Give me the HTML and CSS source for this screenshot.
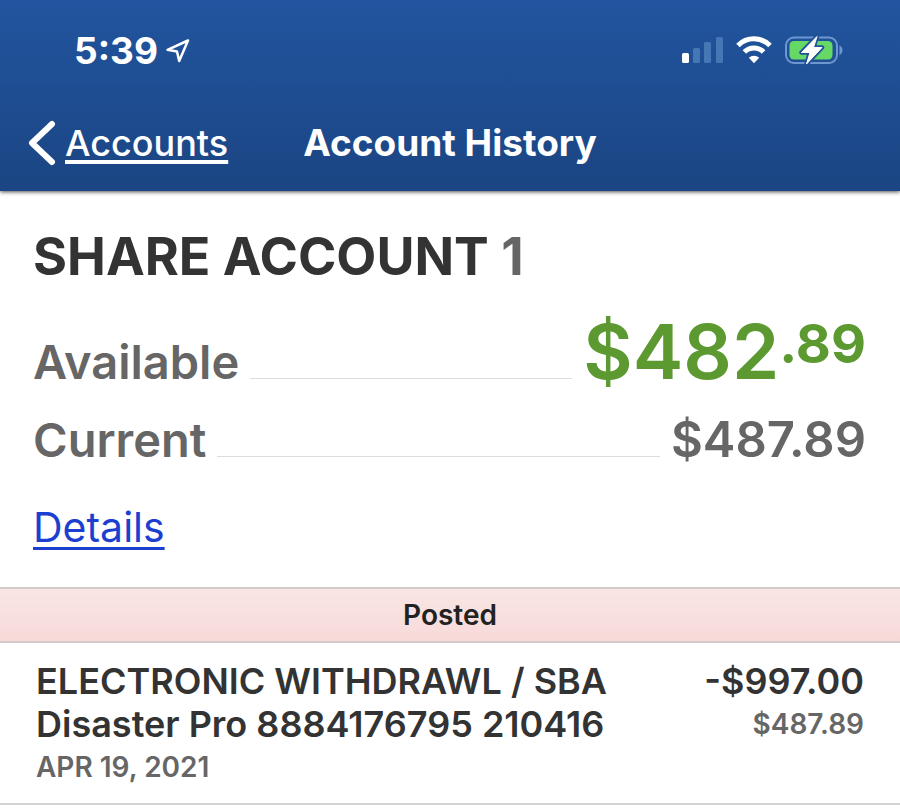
FILE: index.html
```html
<!DOCTYPE html>
<html lang="en">
<head>
<meta charset="utf-8">
<meta name="viewport" content="width=device-width, initial-scale=1">
<title>Account History</title>
<link rel="stylesheet" href="styles.css">
</head>
<body>
<header class="top">
  <div class="status">
    <span class="clock">5:39</span>
    <svg class="locate" width="26" height="26" viewBox="0 0 26 26" aria-hidden="true"><path d="M23 2.500L2.500 11.800l9.500 1.700 2.200 9.500z" fill="none" stroke="#fff" stroke-width="2.500" stroke-linejoin="round"/></svg>
    <svg class="system" width="164" height="32" viewBox="0 0 164 32" aria-hidden="true">
      <rect x="2" y="18" width="7" height="10" rx="1.600" fill="#fff"/>
      <g fill="#4677b5"><rect x="13" y="13" width="7" height="15" rx="1.600"/><rect x="24" y="7" width="7" height="21" rx="1.600"/><rect x="36" y="2" width="7" height="26" rx="1.600"/></g>
      <g fill="none" stroke="#fff" stroke-width="5">
        <path d="M58 10.500a22.500 22.500 0 0 1 32 0"/>
        <path d="M64.400 17a13.400 13.400 0 0 1 19.200 0"/>
      </g>
      <path d="M68.800 22.700a7.600 7.600 0 0 1 10.400 0L74 28.200z" fill="#fff"/>
      <rect x="106" y="2.500" width="51" height="25.500" rx="8" fill="none" stroke="#6f97cf" stroke-width="2"/>
      <rect x="109.500" y="6" width="43" height="18.500" rx="4.500" fill="#65d866"/>
      <path d="M159.500 10.500c4 1.500 4 8 0 9.500z" fill="#6f97cf"/>
      <path d="M137 1.500L121.500 17.500h8.500L126.500 29l15.500-16.500h-8.500z" fill="#fff" stroke="#21539b" stroke-width="4.500" stroke-linejoin="round"/>
      <path d="M137 1.500L121.500 17.500h8.500L126.500 29l15.500-16.500h-8.500z" fill="#fff" stroke="#fff" stroke-width="1" stroke-linejoin="round"/>
    </svg>
  </div>
  <nav class="bar">
    <a class="back" href="#accounts">
      <svg width="28" height="46" viewBox="0 0 28 46" aria-hidden="true"><path d="M24 4L4 23l20 19" fill="none" stroke="#fff" stroke-width="6" stroke-linecap="round" stroke-linejoin="round"/></svg>
      <span class="back-text">Accounts</span>
    </a>
    <h1 class="title">Account History</h1>
  </nav>
</header>
<main>
  <section class="summary">
    <h2 class="account">SHARE ACCOUNT <span class="suffix">1</span></h2>
    <dl class="balances">
      <div class="balance">
        <dt>Available</dt>
        <dd class="available">$482<span class="cents">.89</span></dd>
      </div>
      <div class="balance">
        <dt>Current</dt>
        <dd>$487.89</dd>
      </div>
    </dl>
    <a class="details" href="#details">Details</a>
  </section>
  <section>
    <h3 class="band">Posted</h3>
    <ul class="history">
      <li class="entry">
        <div class="what">
          <p class="name">ELECTRONIC WITHDRAWL / SBA Disaster Pro 8884176795 210416</p>
          <p class="minor">APR 19, 2021</p>
        </div>
        <div class="sums">
          <p class="amount">-$997.00</p>
          <p class="minor">$487.89</p>
        </div>
      </li>
    </ul>
  </section>
</main>
</body>
</html>
```
FILE: styles.css
```css
* { box-sizing: border-box; }

body, h1, h2, h3, p, ul, dl, dt, dd { margin: 0; padding: 0; }

body {
  background: #fff;
  color: #333;
  font-family: Inter, "Liberation Sans", sans-serif;
}

.top {
  position: relative;
  padding-bottom: 7px;
  color: #fff;
  background: linear-gradient(#21559f, #1b4583);
  box-shadow: 0 1px 4px rgba(0, 0, 0, 0.7);
}

.status {
  display: flex;
  align-items: center;
  height: 102px;
  padding: 0 56px 0 74px;
}

.clock {
  font-size: 37px;
  font-weight: 700;
  line-height: 44px;
}

.locate { margin-left: 7px; }

.system { margin-left: auto; }

.bar {
  display: grid;
  grid-template-columns: 1fr auto 1fr;
  align-items: center;
  height: 82px;
  padding: 0 28px;
}

.back {
  display: flex;
  align-items: center;
  gap: 9px;
  color: #fff;
  text-decoration: none;
}

.back-text {
  font-size: 36px;
  font-weight: 500;
  line-height: 44px;
  text-decoration: underline;
  text-decoration-thickness: 4px;
  text-underline-offset: 4px;
}

.title {
  font-size: 37px;
  font-weight: 700;
  line-height: 44px;
}

.summary { padding: 34px 34px 32px 33px; }

.account {
  font-size: 52px;
  font-weight: 700;
  line-height: 64px;
}

.suffix { color: #666; }

.balances {
  display: grid;
  gap: 21px;
  margin: 22px 0 31px;
}

.balance {
  display: flex;
  align-items: baseline;
  color: #666;
  font-size: 49px;
  font-weight: 600;
  line-height: 56px;
}

.balance dt {
  display: flex;
  flex: 1;
  align-items: baseline;
  font-size: 47px;
}

.balance dt::after {
  content: "";
  flex: 1;
  margin: 0 11px;
  border-bottom: 1px solid #ddd;
}

.balance .available {
  color: #5c9a31;
  font-size: 76px;
  line-height: 80px;
}

.cents {
  font-size: 54px;
  font-weight: 700;
  line-height: 52px;
  vertical-align: 16px;
}

.details {
  display: block;
  width: fit-content;
  color: #1c3fd0;
  font-size: 41px;
  line-height: 56px;
  text-decoration-thickness: 3px;
  text-underline-offset: 5px;
}

.band {
  border: solid #d2cbca;
  border-width: 2px 0;
  background: linear-gradient(#f9e6e4, #f7dad9);
  color: #222;
  font-size: 28px;
  font-weight: 600;
  line-height: 52px;
  text-align: center;
}

.history { list-style: none; }

.entry {
  display: flex;
  gap: 60px;
  justify-content: space-between;
  padding: 17px 36px 14px;
  border-bottom: 2px solid #d4d4d4;
  line-height: 43px;
}

.what { max-width: 620px; }

.sums { text-align: right; }

.name,
.amount {
  font-size: 36px;
  font-weight: 600;
}

.minor {
  color: #666;
  font-size: 28px;
  font-weight: 600;
}
```
